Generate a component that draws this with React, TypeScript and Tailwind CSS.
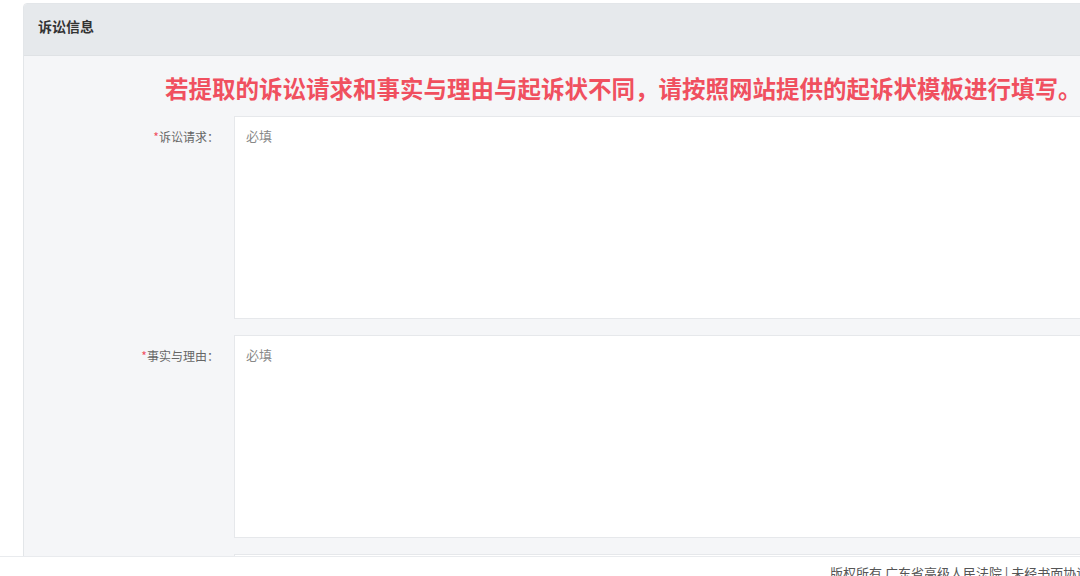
import React from 'react'

const cjk = { fontFamily: '"Microsoft YaHei", "Noto Sans CJK SC", "Noto Sans", sans-serif' }

function Field({ label }: { label: string }) {
  return (
    <div className="flex">
      <div className="w-[210px] shrink-0 pr-[15px] pt-[12px] text-right text-[12px] leading-[18px] text-[#666]">
        <span className="text-[#f0505f]">*</span>
        {label}：
      </div>
      <textarea
        placeholder="必填"
        className="h-[203px] w-[900px] shrink-0 resize-none border border-[#e6e8eb] bg-white px-[11px] py-[10px] text-[13px] leading-[18px] text-[#333] outline-none placeholder:text-[#888]"
        style={cjk}
      />
    </div>
  )
}

export default function App() {
  return (
    <div className="relative h-[576px] w-[1080px] overflow-hidden bg-white" style={cjk}>
      <div className="ml-[23px] mt-[3px] w-[1100px] overflow-hidden rounded-tl-[4px] border border-[#e3e6e9]">
        <div className="flex h-[52px] items-center border-b border-[#dfe2e5] bg-[#e6e9ec] px-[14px] pb-[6px]">
          <h2 className="text-[14px] font-bold text-[#333]">诉讼信息</h2>
        </div>
        <div className="bg-[#f5f6f8] pb-[40px]">
          <div className="pl-[141px] pt-[18px] pb-[14px] text-[23.5px] font-bold leading-[28px] text-[#f0505f]">
            若提取的诉讼请求和事实与理由与起诉状不同，请按照网站提供的起诉状模板进行填写。
          </div>
          <div className="flex flex-col gap-[16px]">
            <Field label="诉讼请求" />
            <Field label="事实与理由" />
            <Field label="证据" />
          </div>
        </div>
      </div>
      <footer className="absolute bottom-0 left-0 h-[20px] w-full border-t border-[#e9ebee] bg-white">
        <p className="whitespace-nowrap pl-[830px] pt-[7px] text-[13px] leading-[18px] text-[#555]">
          版权所有 广东省高级人民法院 | 未经书面协议不得复制或建立镜像
        </p>
      </footer>
    </div>
  )
}
